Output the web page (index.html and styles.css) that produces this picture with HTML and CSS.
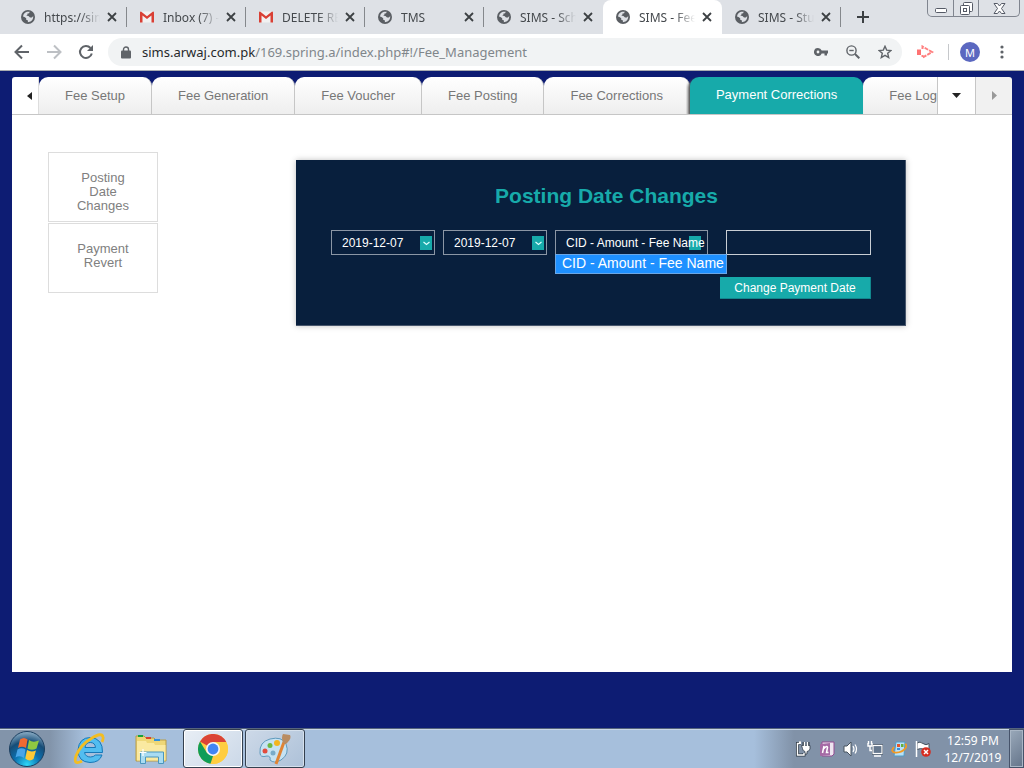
FILE: index.html
```
<!DOCTYPE html>
<html lang="en">
<head>
<meta charset="utf-8">
<title>SIMS - Fee Management</title>
<link rel="stylesheet" href="styles.css">
</head>
<body>
<svg class="defs" width="0" height="0" aria-hidden="true">
  <symbol id="globe" viewBox="0 0 14 14"><circle cx="7" cy="7" r="7" fill="#5a5e63"/><path d="M2 6.500Q2.500 3 6 1.800L8.800 1.700 8 3.200 6.200 3.800 6.500 5.200 5 6H7.500L9 7.500 11 7.400 12.200 6Q12.500 9.500 9.500 11.500L6.800 12.300 7 10.500 5.200 9.800V8.300L3.500 7Z" fill="#dee1e6"/></symbol>
  <symbol id="gmail" viewBox="0 0 14 11"><path d="M1 0H13V11H1Z" fill="#f1f1f1"/><path d="M0 1Q0 0 1 0L7 4.800 13 0Q14 0 14 1V11H11.500V4L7 7.600 2.500 4V11H0Z" fill="#d93f34"/></symbol>
  <symbol id="cross" viewBox="0 0 10 10"><path d="M1 1L9 9M9 1L1 9" stroke="#3c4043" stroke-width="1.800"/></symbol>
</svg>

<header class="browser">
  <div class="tabstrip">
    <div class="tab"><svg class="favicon"><use href="#globe"/></svg><span class="tab-title">https://sim</span><button class="close" aria-label="Close"><svg><use href="#cross"/></svg></button></div>
    <div class="tab"><svg class="favicon"><use href="#gmail"/></svg><span class="tab-title">Inbox (7) -</span><button class="close" aria-label="Close"><svg><use href="#cross"/></svg></button></div>
    <div class="tab"><svg class="favicon"><use href="#gmail"/></svg><span class="tab-title">DELETE RE</span><button class="close" aria-label="Close"><svg><use href="#cross"/></svg></button></div>
    <div class="tab"><svg class="favicon"><use href="#globe"/></svg><span class="tab-title">TMS</span><button class="close" aria-label="Close"><svg><use href="#cross"/></svg></button></div>
    <div class="tab plain"><svg class="favicon"><use href="#globe"/></svg><span class="tab-title">SIMS - Sch</span><button class="close" aria-label="Close"><svg><use href="#cross"/></svg></button></div>
    <div class="tab current"><svg class="favicon"><use href="#globe"/></svg><span class="tab-title">SIMS - Fee</span><button class="close" aria-label="Close"><svg><use href="#cross"/></svg></button></div>
    <div class="tab"><svg class="favicon"><use href="#globe"/></svg><span class="tab-title">SIMS - Stu</span><button class="close" aria-label="Close"><svg><use href="#cross"/></svg></button></div>
    <button class="newtab" aria-label="New tab"><svg width="12" height="12" viewBox="0 0 12 12"><path d="M6 0V12M0 6H12" stroke="#3c4043" stroke-width="2"/></svg></button>
    <div class="window-buttons">
      <button class="low" aria-label="Minimize"><svg width="12" height="5" viewBox="0 0 12 5"><rect x=".5" y=".5" width="11" height="4" rx="1" fill="#fff" stroke="#555a66"/></svg></button>
      <button aria-label="Restore"><svg width="13" height="13" viewBox="0 0 13 13"><g fill="#fff" stroke="#555a66"><rect x="3.500" y=".5" width="9" height="9" rx="1"/><rect x=".5" y="3.500" width="9" height="9" rx="1"/><rect x="3.500" y="6.500" width="3" height="3"/></g></svg></button>
      <button class="wide" aria-label="Close window"><svg width="13" height="11" viewBox="0 0 13 11"><path d="M1 .5H4.500L6.500 3 8.500 .5H12L8.500 5.500 12 10.500H8.500L6.500 8 4.500 10.500H1L4.500 5.500Z" fill="#fff" stroke="#555a66"/></svg></button>
    </div>
  </div>
  <div class="toolbar">
    <button aria-label="Back"><svg width="16" height="16" viewBox="0 0 16 16"><path d="M15 8H2M8 1.500L1.500 8 8 14.500" fill="none" stroke="#5f6368" stroke-width="2"/></svg></button>
    <button aria-label="Forward"><svg width="16" height="16" viewBox="0 0 16 16"><path d="M1 8H14M8 1.500L14.500 8 8 14.500" fill="none" stroke="#bdc0c4" stroke-width="2"/></svg></button>
    <button aria-label="Reload"><svg width="16" height="16" viewBox="0 0 16 16"><path d="M13.800 9.500A6 6 0 1 1 12.500 4" fill="none" stroke="#5f6368" stroke-width="2"/><path d="M15 1V7H9Z" fill="#5f6368"/></svg></button>
    <div class="omnibox">
      <svg width="10" height="13" viewBox="0 0 10 13"><rect y="4.500" width="10" height="8" rx="1" fill="#5f6368"/><path d="M2.500 5V3.500A2.500 2.500 0 0 1 7.500 3.500V5" fill="none" stroke="#5f6368" stroke-width="1.400"/></svg>
      <span class="url"><b>sims.arwaj.com.pk</b>/169.spring.a/index.php#!/Fee_Management</span>
      <svg width="14" height="8" viewBox="0 0 14 8"><path fill-rule="evenodd" d="M4 0A4 4 0 0 1 7.700 2.600H14V5.400H13V7.500H10.500V5.400H7.700A4 4 0 1 1 4 0ZM4 2.600A1.400 1.400 0 1 0 4 5.400 1.400 1.400 0 0 0 4 2.600Z" fill="#5f6368"/></svg>
      <svg width="14" height="14" viewBox="0 0 14 14"><g fill="none" stroke="#5f6368" stroke-width="1.400"><circle cx="5.500" cy="5.500" r="4.600"/><path d="M3.300 5.500H7.700"/><path d="M9 9L13.300 13.300" stroke-width="2"/></g></svg>
      <svg width="14" height="14" viewBox="0 0 14 14"><path d="M7 1.300L8.700 5.100 12.900 5.500 9.700 8.300 10.700 12.500 7 10.300 3.300 12.500 4.300 8.300 1.100 5.500 5.300 5.100Z" fill="none" stroke="#5f6368" stroke-width="1.400"/></svg>
    </div>
    <svg class="ext" width="17" height="14" viewBox="0 0 17 14"><path d="M0 4.500H4V10H0Z" fill="#ff7373"/><path d="M5.500 4V1.500L15 7 5.500 12.500V10" fill="none" stroke="#ff8080" stroke-width="2" stroke-dasharray="4 1"/></svg>
    <span class="divider"></span>
    <span class="avatar">M</span>
    <button class="menu" aria-label="Menu"><svg width="4" height="14" viewBox="0 0 4 14"><g fill="#5f6368"><circle cx="2" cy="2" r="1.600"/><circle cx="2" cy="7" r="1.600"/><circle cx="2" cy="12" r="1.600"/></g></svg></button>
  </div>
</header>

<main class="page">
  <div class="sheet">
    <nav class="module-tabs">
      <button class="nav-button prev" aria-label="Previous"><svg width="5" height="8" viewBox="0 0 5 8"><path d="M5 0V8L0 4Z" fill="#222"/></svg></button>
      <a class="module" href="#">Fee Setup</a>
      <a class="module" href="#">Fee Generation</a>
      <a class="module" href="#">Fee Voucher</a>
      <a class="module" href="#">Fee Posting</a>
      <a class="module" href="#">Fee Corrections</a>
      <a class="module active" href="#">Payment Corrections</a>
      <a class="module last" href="#">Fee Log</a>
      <button class="nav-button list" aria-label="All tabs"><svg width="9" height="5" viewBox="0 0 9 5"><path d="M0 0H9L4.500 5Z" fill="#222"/></svg></button>
      <button class="nav-button next" aria-label="Next"><svg width="5" height="9" viewBox="0 0 5 9"><path d="M0 0V9L5 4.500Z" fill="#999"/></svg></button>
    </nav>
    <div class="content">
      <nav class="side">
        <a href="#">Posting Date Changes</a>
        <a href="#">Payment Revert</a>
      </nav>
      <form class="panel">
        <h1>Posting Date Changes</h1>
        <div class="fields">
          <div class="field date"><select aria-label="From date"><option>2019-12-07</option></select><span class="arrow"><svg width="7" height="5" viewBox="0 0 7 5"><path d="M.5 1L3.500 3.500 6.500 1" fill="none" stroke="#dff" stroke-width="1.200"/></svg></span></div>
          <div class="field date"><select aria-label="To date"><option>2019-12-07</option></select><span class="arrow"><svg width="7" height="5" viewBox="0 0 7 5"><path d="M.5 1L3.500 3.500 6.500 1" fill="none" stroke="#dff" stroke-width="1.200"/></svg></span></div>
          <div class="field fee"><span class="arrow"></span><select aria-label="Fee"><option>CID - Amount - Fee Name</option></select><div class="popup" role="listbox"><div role="option" aria-selected="true">CID - Amount - Fee Name</div></div></div>
          <input class="value" type="text" aria-label="New payment date">
        </div>
        <button class="submit" type="button">Change Payment Date</button>
      </form>
    </div>
  </div>
</main>

<footer class="taskbar">
  <button class="start" aria-label="Start"><svg width="38" height="38" viewBox="0 0 38 38"><defs><radialGradient id="orb" cx=".5" cy=".95" r=".95"><stop offset="0" stop-color="#2fd8f8"/><stop offset=".4" stop-color="#0b6fae"/><stop offset=".7" stop-color="#174d77"/><stop offset="1" stop-color="#8fb0c8"/></radialGradient></defs><circle cx="19" cy="19" r="17.500" fill="url(#orb)" stroke="#1c3f60"/><path d="M12 9.500Q16 6.500 19.500 9.500L18 18Q14 15.500 10 18Z" fill="#ef6a32"/><path d="M21 10Q25 13 31 10.500L28.500 18.500Q24 21 19.500 18.500Z" fill="#90c841"/><path d="M9.500 19.500Q13.500 17 17.500 19.500L16 28Q12 25 7.500 27.500Z" fill="#48a5e8"/><path d="M19 20Q23 22.500 28 20.500L25.500 29Q21.500 32 17.300 28.500Z" fill="#fdc936"/></svg></button>
  <button class="task ie" aria-label="Internet Explorer"><svg width="32" height="32" viewBox="0 0 32 32"><path fill-rule="evenodd" d="M29.500 19.500H11.500Q12.500 24 17.500 24 20.500 24 22.500 22H29Q26.500 29.500 17 29.500 5 29 5 17 6 4.500 17.500 4.500 30 5.500 29.500 19.500ZM12 14.500H22.500Q22 9.500 17.300 9.500 12.500 9.500 12 14.500Z" fill="#52bdf0" stroke="#1678b8"/><path d="M9 28Q0 33 3 23 7 12 19 5 29-1 30 4 30.500 6 29 9" fill="none" stroke="#f3bd22" stroke-width="2.800"/></svg></button>
  <button class="task folder" aria-label="Windows Explorer"><svg width="34" height="32" viewBox="0 0 34 32"><path d="M2 3H10L12 5H20L22 7H32V28H2Z" fill="#eed777" stroke="#b79c48"/><path d="M4 2H9V4H4Z" fill="#15a23b"/><path d="M12 4H17V6H12Z" fill="#d9412e"/><path d="M20 6H26V8H20Z" fill="#3090dc"/><path d="M3 8H12L13 10H20L21 12H31.500V27.500H3Z" fill="#fae9a1"/><path d="M6.500 30.500V19H29.500V30.500H24.500V24H11.500V30.500Z" fill="#a9dcf2" stroke="#4b96bd"/><path d="M9 16V23M5.500 19.500H12.500" stroke="#fff" stroke-width="1.200"/></svg></button>
  <button class="task window" aria-label="Google Chrome"><svg width="30" height="30" viewBox="0 0 30 30"><circle cx="15" cy="15" r="15" fill="#ffcd40"/><path d="M15 15L2 7.500A15 15 0 0 1 28.300 8H15Z" fill="#db4437"/><path d="M2 7.500L9 19 15 22 12.500 29.800A15 15 0 0 1 2 7.500Z" fill="#0f9d58"/><path d="M15 30L12.500 29.800 20.800 18.500 15 8H28.300A15 15 0 0 1 15 30Z" fill="#ffcd40"/><circle cx="15" cy="15" r="7" fill="#f4f6f8"/><circle cx="15" cy="15" r="5.400" fill="#4285f4"/></svg></button>
  <button class="task window dim" aria-label="Paint"><svg width="32" height="32" viewBox="0 0 32 32"><path d="M1 20Q0 9 11 6 23 3 27 11 31 21 22 27 15 31 11 27 12 23 8 23 1 25 1 20Z" fill="#c6e2f2" stroke="#5f9abd"/><circle cx="6" cy="18" r="2.500" fill="#e34c3d"/><circle cx="11" cy="12.500" r="2.500" fill="#6cb844"/><circle cx="18" cy="10" r="3" fill="#f3b51f"/><circle cx="14" cy="20" r="2.500" fill="#79abc9"/><path d="M17 31L25 9" stroke="#e08434" stroke-width="3"/><path d="M24 10Q22 4 24 1L31 2Q33 6 27 11Z" fill="#b98c62"/></svg></button>
  <div class="tray">
    <svg width="16" height="16" viewBox="0 0 16 16"><path d="M6 2.500H2.500V14H9V12M4 1H6M9 1V5M13 1V5" fill="none" stroke="#2f3a46" stroke-width="3"/><path d="M6.500 4.500H15V8Q14 10.500 12 10.500V13H10V10.500Q7.500 10 7.500 7.500Z" fill="#fff" stroke="#2f3a46" stroke-width=".8"/><path d="M6 2.500H2.500V14H9V12M4 1H6M9.500 1V5M12.500 1V5" fill="none" stroke="#fff" stroke-width="1.400"/></svg>
    <svg width="16" height="16" viewBox="0 0 16 16"><path d="M3 1H15V13L13 15H3Z" fill="#eee5f0" stroke="#924b91"/><path d="M1 3L11 2V14L1 15Z" fill="#a56aa5"/><path d="M3.500 12L5 5M4.500 8Q8 4 8.500 6.500L7.500 11.500H9.500" fill="none" stroke="#fff" stroke-width="1.500"/></svg>
    <svg width="16" height="16" viewBox="0 0 16 16"><path d="M1 5H4L8 1V15L4 11H1Z" fill="#fff" stroke="#46525f"/><path d="M10 5Q12 8 10 11M12 3.500Q15 8 12 12.500" fill="none" stroke="#fff" stroke-width="1.200"/></svg>
    <svg width="16" height="16" viewBox="0 0 16 16"><path d="M5 3.500H16V13.500H5Z" fill="#2f3a46"/><rect x="6" y="4.500" width="9" height="8" fill="#66788e" stroke="#fff" stroke-width="1.200"/><path d="M7 15H14M1 2V5H5V2M3 5V9.500H5M1.500 0V3M4.500 0V3" fill="none" stroke="#fff" stroke-width="1.400"/></svg>
    <svg width="16" height="16" viewBox="0 0 16 16"><path d="M5 1H14L13 15H3Z" fill="#b9e1f6" stroke="#4f9bc7"/><path d="M6 3H9V6H6Z" fill="#e4552d"/><path d="M10 3H12.500V6H10Z" fill="#65af3b"/><path d="M6 7H9V9H6Z" fill="#3a8fd8"/><path d="M3 6Q-1 11 4 11.500 11 12 14.500 7 16.500 4 14 3" fill="none" stroke="#f39a22" stroke-width="1.800"/></svg>
    <svg width="16" height="16" viewBox="0 0 16 16"><path d="M2 2Q5 0 8 2.500T14 2.500V9Q10 9 8 8T2 8.500Z" fill="#fff" stroke="#46525f"/><path d="M1.500 0V16" stroke="#fff" stroke-width="1.500"/><circle cx="11" cy="11" r="4.800" fill="#d62c20"/><path d="M9 9L13 13M13 9L9 13" stroke="#fff" stroke-width="1.500"/></svg>
  </div>
  <div class="clock"><span>12:59 PM</span><span>12/7/2019</span></div>
  <button class="peek" aria-label="Show desktop"></button>
</footer>
</body>
</html>
```
FILE: styles.css
```
* { box-sizing: border-box; }
body { margin: 0; min-height: 100vh; display: flex; flex-direction: column; background: #0d1c73; font-family: "Liberation Sans", Arial, sans-serif; }
button { border: 0; padding: 0; background: none; font: inherit; color: inherit; display: flex; align-items: center; justify-content: center; }
svg { display: block; flex: none; }
a { text-decoration: none; color: inherit; }
.defs { position: absolute; }

.browser { font-family: "Noto Sans", "Open Sans", sans-serif; background: #fff; border-bottom: 1px solid #a9acb0; }
.tabstrip { height: 34px; display: flex; background: #dee1e6; padding-left: 8px; }
.tab { flex: 0 1 119px; min-width: 0; display: flex; align-items: center; padding: 0 9px 0 13px; background: linear-gradient(#85888c, #85888c) right center / 1px 20px no-repeat; color: #45494d; }
.tab.plain { background: none; }
.tab.current { background: #fff; border-radius: 8px 8px 0 0; }
.favicon { width: 14px; height: 14px; margin-right: 9px; }
.tab-title { flex: 1; min-width: 0; overflow: hidden; white-space: nowrap; font-size: 12px; mask-image: linear-gradient(to right, #000 65%, transparent); }
.close { width: 12px; height: 16px; margin-left: 6px; }
.close svg { width: 10px; height: 10px; }
.newtab { width: 44px; }
.window-buttons { margin-left: auto; margin-right: 4px; height: 17px; display: flex; border: 1px solid #80858f; border-top: 0; border-radius: 0 0 5px 5px; }
.window-buttons button { width: 25px; }
.window-buttons button + button { border-left: 1px solid #80858f; }
.window-buttons .low { padding-top: 4px; }
.window-buttons .wide { width: 41px; }
.toolbar { height: 36px; display: flex; align-items: center; padding: 0 16px 0 14px; gap: 16px; }
.omnibox { flex: 1; height: 28px; margin-left: -2px; padding: 0 10px 0 13px; border-radius: 14px; background: #f1f3f4; display: flex; align-items: center; gap: 18px; }
.url { flex: 1; margin-left: -7px; font-size: 13px; color: #80868b; white-space: nowrap; }
.url b { font-weight: 400; color: #26292c; }
.ext { margin-left: -1px; }
.divider { width: 1px; height: 16px; background: #c6c8cb; margin: 0 -5px 0 -2px; }
.avatar { width: 20px; height: 20px; border-radius: 50%; background: #5b68c0; color: #fff; font-size: 11px; display: flex; align-items: center; justify-content: center; }
.menu { width: 12px; }

.page { flex: 1; padding: 6px 12px 56px; display: flex; flex-direction: column; }
.sheet { flex: 1; background: linear-gradient(#fff, #fff) 0 37px no-repeat; }
.module-tabs { height: 38px; display: flex; font-size: 13px; color: #777; border-bottom: 1px solid #c6c6c6; }
.module { display: flex; align-items: center; padding: 0 26px; border-right: 1px solid #c6c6c6; border-radius: 9px 9px 0 0; background: linear-gradient(#fff, #eee); white-space: nowrap; }
.module.active { background: #17aaaa; color: #fff; border-right: 0; padding-bottom: 2px; box-shadow: -2px 2px 3px #555; clip-path: inset(0 0 0 -4px); }
.module.last { flex: 1; min-width: 0; padding-right: 0; border-radius: 9px 0 0 0; }
.nav-button { width: 37px; background: #fff; }
.prev { width: 27px; padding-left: 9px; border-right: 1px solid #ddd; border-radius: 3px 0 0 0; }
.next { background: #f1f1f1; border-left: 1px solid #c6c6c6; border-radius: 0 3px 0 0; }
.content { display: flex; align-items: flex-start; padding: 37px 36px 0; }
.side { width: 110px; display: flex; flex-direction: column; gap: 1px; }
.side a { height: 70px; padding: 18px 24px; border: 1px solid #ddd; text-align: center; font-size: 13px; line-height: 14px; color: #808080; }
.panel { width: 610px; margin: 8px 0 0 138px; padding: 24px 34px 26px 35px; background: #081f3d; border-bottom: 1px solid #47566c; border-right: 1px solid #47566c; box-shadow: 0 0 6px rgba(0,0,0,.25); display: flex; flex-direction: column; }
h1 { margin: 0 0 22px; padding-left: 11px; text-align: center; font-size: 21px; line-height: 24px; color: #17aaaa; }
.fields { display: flex; gap: 8px; height: 25px; }
.field { position: relative; border: 1px solid #8b96a5; }
.date { width: 104px; }
.fee { width: 153px; margin-right: 10px; }
select { position: relative; appearance: none; width: 100%; height: 100%; border: 0; padding: 0 0 0 10px; background: transparent; color: #fff; font-family: inherit; font-size: 12px; }
.date select, .submit { font-size: 12px; }
.arrow { position: absolute; right: 2px; top: 5px; width: 12px; height: 14px; background: #17aaaa; display: flex; align-items: center; justify-content: center; pointer-events: none; }
.fee .arrow { right: 6px; }
.popup { position: absolute; left: -1px; top: 23px; height: 20px; border: 1px solid #6ba7e6; background: #1e90ff; color: #fff; padding: 0 2px 0 6px; font-size: 14px; line-height: 17px; white-space: nowrap; }
.value { flex: 1; min-width: 0; border: 1px solid #c9ced4; background: transparent; color: #fff; padding: 0 8px; font-size: 12px; }
.submit { align-self: flex-end; width: 151px; height: 22px; margin-top: 22px; background: #17aaaa; border: 1px solid #11878d; border-width: 0 1px 1px 0; color: #fff; }

.taskbar { height: 40px; display: flex; align-items: center; border-top: 1px solid #55647c; background: linear-gradient(to right, #8294aa 0, #8294aa 50px, #a6bfdc 85px, #a6bfdc calc(100% - 270px), #8192a8 calc(100% - 230px)); box-shadow: inset 0 1px #c9d7e6; }
.start { width: 54px; }
.task { width: 62px; height: 39px; }
.ie { margin-left: 4px; }
.window { width: 60px; border: 1px solid #34404f; border-radius: 3px; background: linear-gradient(135deg, #e8eef5, #cbd8e8); box-shadow: inset 0 0 0 1px #fff; margin-left: 1px; }
.window.dim { margin-left: 2px; background: linear-gradient(135deg, #cdd9e8, #adc1d8); box-shadow: inset 0 0 0 1px #d5e0ec; }
.tray { margin-left: auto; display: flex; gap: 8px; }
.clock { width: 78px; padding-left: 6px; display: flex; flex-direction: column; align-items: center; font-family: "Noto Sans", sans-serif; font-size: 12px; line-height: 17px; color: #fff; }
.peek { width: 15px; height: 39px; border: 1px solid #46536a; background: linear-gradient(135deg, #9aa9ba, #64748a); box-shadow: inset 0 0 0 1px #a9b6c5; }
```
